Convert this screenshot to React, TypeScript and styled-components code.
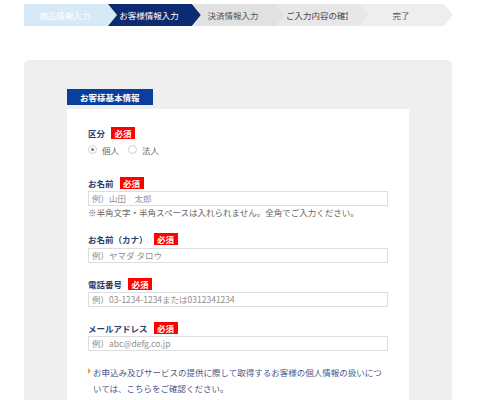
import React from "react";
import styled, { createGlobalStyle } from "styled-components";

const Global = createGlobalStyle`
  html, body { margin: 0; padding: 0; background: #fff; }
  body { font-family: "Noto Sans CJK JP", "Noto Sans", sans-serif; }
  * { box-sizing: border-box; }
`;

const Page = styled.div`
  padding: 4px 0 0 24px;
`;

const StepBar = styled.div`
  display: flex;
  height: 22px;
`;

type StepTone = "done" | "active" | "todo1" | "todo2" | "todo3";
const stepBg: Record<StepTone, string> = {
  done: "#d6e9f6",
  active: "#0c2b70",
  todo1: "#e1e1e1",
  todo2: "#e7e7e7",
  todo3: "#eeeeee",
};
const stepFg: Record<StepTone, string> = {
  done: "#ffffff",
  active: "#ffffff",
  todo1: "#555555",
  todo2: "#444444",
  todo3: "#555555",
};

const Step = styled.div<{ $tone: StepTone; $first?: boolean }>`
  width: 93px;
  height: 22px;
  flex: none;
  display: flex;
  align-items: center;
  margin-left: ${(p) => (p.$first ? "0" : "-9px")};
  background: ${(p) => stepBg[p.$tone]};
  color: ${(p) => stepFg[p.$tone]};
  clip-path: ${(p) =>
    p.$first
      ? "polygon(0 0, calc(100% - 9px) 0, 100% 50%, calc(100% - 9px) 100%, 0 100%)"
      : "polygon(0 0, calc(100% - 9px) 0, 100% 50%, calc(100% - 9px) 100%, 0 100%, 9px 50%)"};
`;

const StepText = styled.span`
  margin-left: 10px;
  width: 62px;
  font-size: 8.5px;
  line-height: 22px;
  text-align: center;
  white-space: nowrap;
  overflow: hidden;
`;

const Panel = styled.div`
  margin-top: 34px;
  width: 428px;
  background: #efefef;
  border-radius: 5px 5px 0 0;
  padding: 29px 43px 0;
`;

const Tab = styled.div`
  width: 86px;
  height: 16px;
  background: #0b3f9f;
  color: #fff;
  font-size: 8.5px;
  font-weight: bold;
  line-height: 16px;
  padding-left: 13px;
  white-space: nowrap;
`;

const Card = styled.div`
  margin-top: 4px;
  background: #fff;
  padding: 17px 21px 40px;
  display: flex;
  flex-direction: column;
  gap: 14px;
`;

const Field = styled.div<{ $extra?: number }>`
  display: flex;
  flex-direction: column;
  margin-bottom: ${(p) => p.$extra ?? 0}px;
`;

const LabelRow = styled.div`
  display: flex;
  align-items: center;
  gap: 6px;
  height: 13px;
`;

const Label = styled.span`
  color: #2d3d70;
  font-size: 8.5px;
  font-weight: bold;
  white-space: nowrap;
`;

const Required = styled.span`
  background: #ff0000;
  color: #fff;
  font-size: 8.5px;
  font-weight: bold;
  height: 12px;
  line-height: 12px;
  padding: 0 3.5px;
  white-space: nowrap;
`;

const RadioRow = styled.div`
  display: flex;
  align-items: center;
  height: 13px;
  margin-top: 4px;
`;

const RadioItem = styled.label`
  display: flex;
  align-items: center;
  gap: 5px;
  margin-right: 9px;
  font-size: 8.5px;
  color: #666;
`;

const RadioCircle = styled.span<{ $checked?: boolean }>`
  width: 9px;
  height: 9px;
  border: 1px solid #cfcfcf;
  border-radius: 50%;
  display: flex;
  align-items: center;
  justify-content: center;
  &::after {
    content: "";
    width: 3px;
    height: 3px;
    border-radius: 50%;
    background: ${(p) => (p.$checked ? "#777" : "transparent")};
  }
`;

const Input = styled.div<{ $gap?: number }>`
  margin-top: ${(p) => p.$gap ?? 2}px;
  width: 300px;
  height: 15px;
  border: 1px solid #dedede;
  font-size: 8.5px;
  line-height: 13px;
  color: #8f8f8f;
  padding-left: 3px;
  white-space: nowrap;
`;

const Hint = styled.div`
  margin-top: 1px;
  font-size: 8.5px;
  line-height: 11px;
  color: #666;
  white-space: nowrap;
`;

const Notice = styled.div`
  display: flex;
  gap: 2px;
  margin-top: -1px;
  width: 300px;
`;

const Marker = styled.span`
  flex: none;
  width: 0;
  height: 0;
  margin-top: 4px;
  border-left: 3px solid #f3a23a;
  border-top: 3px solid transparent;
  border-bottom: 3px solid transparent;
`;

const NoticeText = styled.p`
  margin: 0;
  font-size: 8.5px;
  line-height: 16px;
  letter-spacing: 0;
  color: #4a5788;
`;

const steps: { text: string; tone: StepTone }[] = [
  { text: "商品情報入力", tone: "done" },
  { text: "お客様情報入力", tone: "active" },
  { text: "決済情報入力", tone: "todo1" },
  { text: "ご入力内容の確認", tone: "todo2" },
  { text: "完了", tone: "todo3" },
];

export default function App() {
  return (
    <>
      <Global />
      <Page>
        <StepBar>
          {steps.map((s, i) => (
            <Step key={s.text} $tone={s.tone} $first={i === 0}>
              <StepText>{s.text}</StepText>
            </Step>
          ))}
        </StepBar>
        <Panel>
          <Tab>お客様基本情報</Tab>
          <Card>
            <Field $extra={6}>
              <LabelRow>
                <Label>区分</Label>
                <Required>必須</Required>
              </LabelRow>
              <RadioRow>
                <RadioItem>
                  <RadioCircle $checked />
                  個人
                </RadioItem>
                <RadioItem>
                  <RadioCircle />
                  法人
                </RadioItem>
              </RadioRow>
            </Field>
            <Field>
              <LabelRow>
                <Label>お名前</Label>
                <Required>必須</Required>
              </LabelRow>
              <Input>例）山田　太郎</Input>
              <Hint>※半角文字・半角スペースは入れられません。全角でご入力ください。</Hint>
            </Field>
            <Field>
              <LabelRow>
                <Label>お名前（カナ）</Label>
                <Required>必須</Required>
              </LabelRow>
              <Input $gap={3}>例）ヤマダ タロウ</Input>
            </Field>
            <Field>
              <LabelRow>
                <Label>電話番号</Label>
                <Required>必須</Required>
              </LabelRow>
              <Input>例）03-1234-1234または0312341234</Input>
            </Field>
            <Field>
              <LabelRow>
                <Label>メールアドレス</Label>
                <Required>必須</Required>
              </LabelRow>
              <Input>例）abc@defg.co.jp</Input>
            </Field>
            <Notice>
              <Marker />
              <NoticeText>
                お申込み及びサービスの提供に際して取得するお客様の個人情報の扱いについては、こちらをご確認ください。
              </NoticeText>
            </Notice>
          </Card>
        </Panel>
      </Page>
    </>
  );
}
